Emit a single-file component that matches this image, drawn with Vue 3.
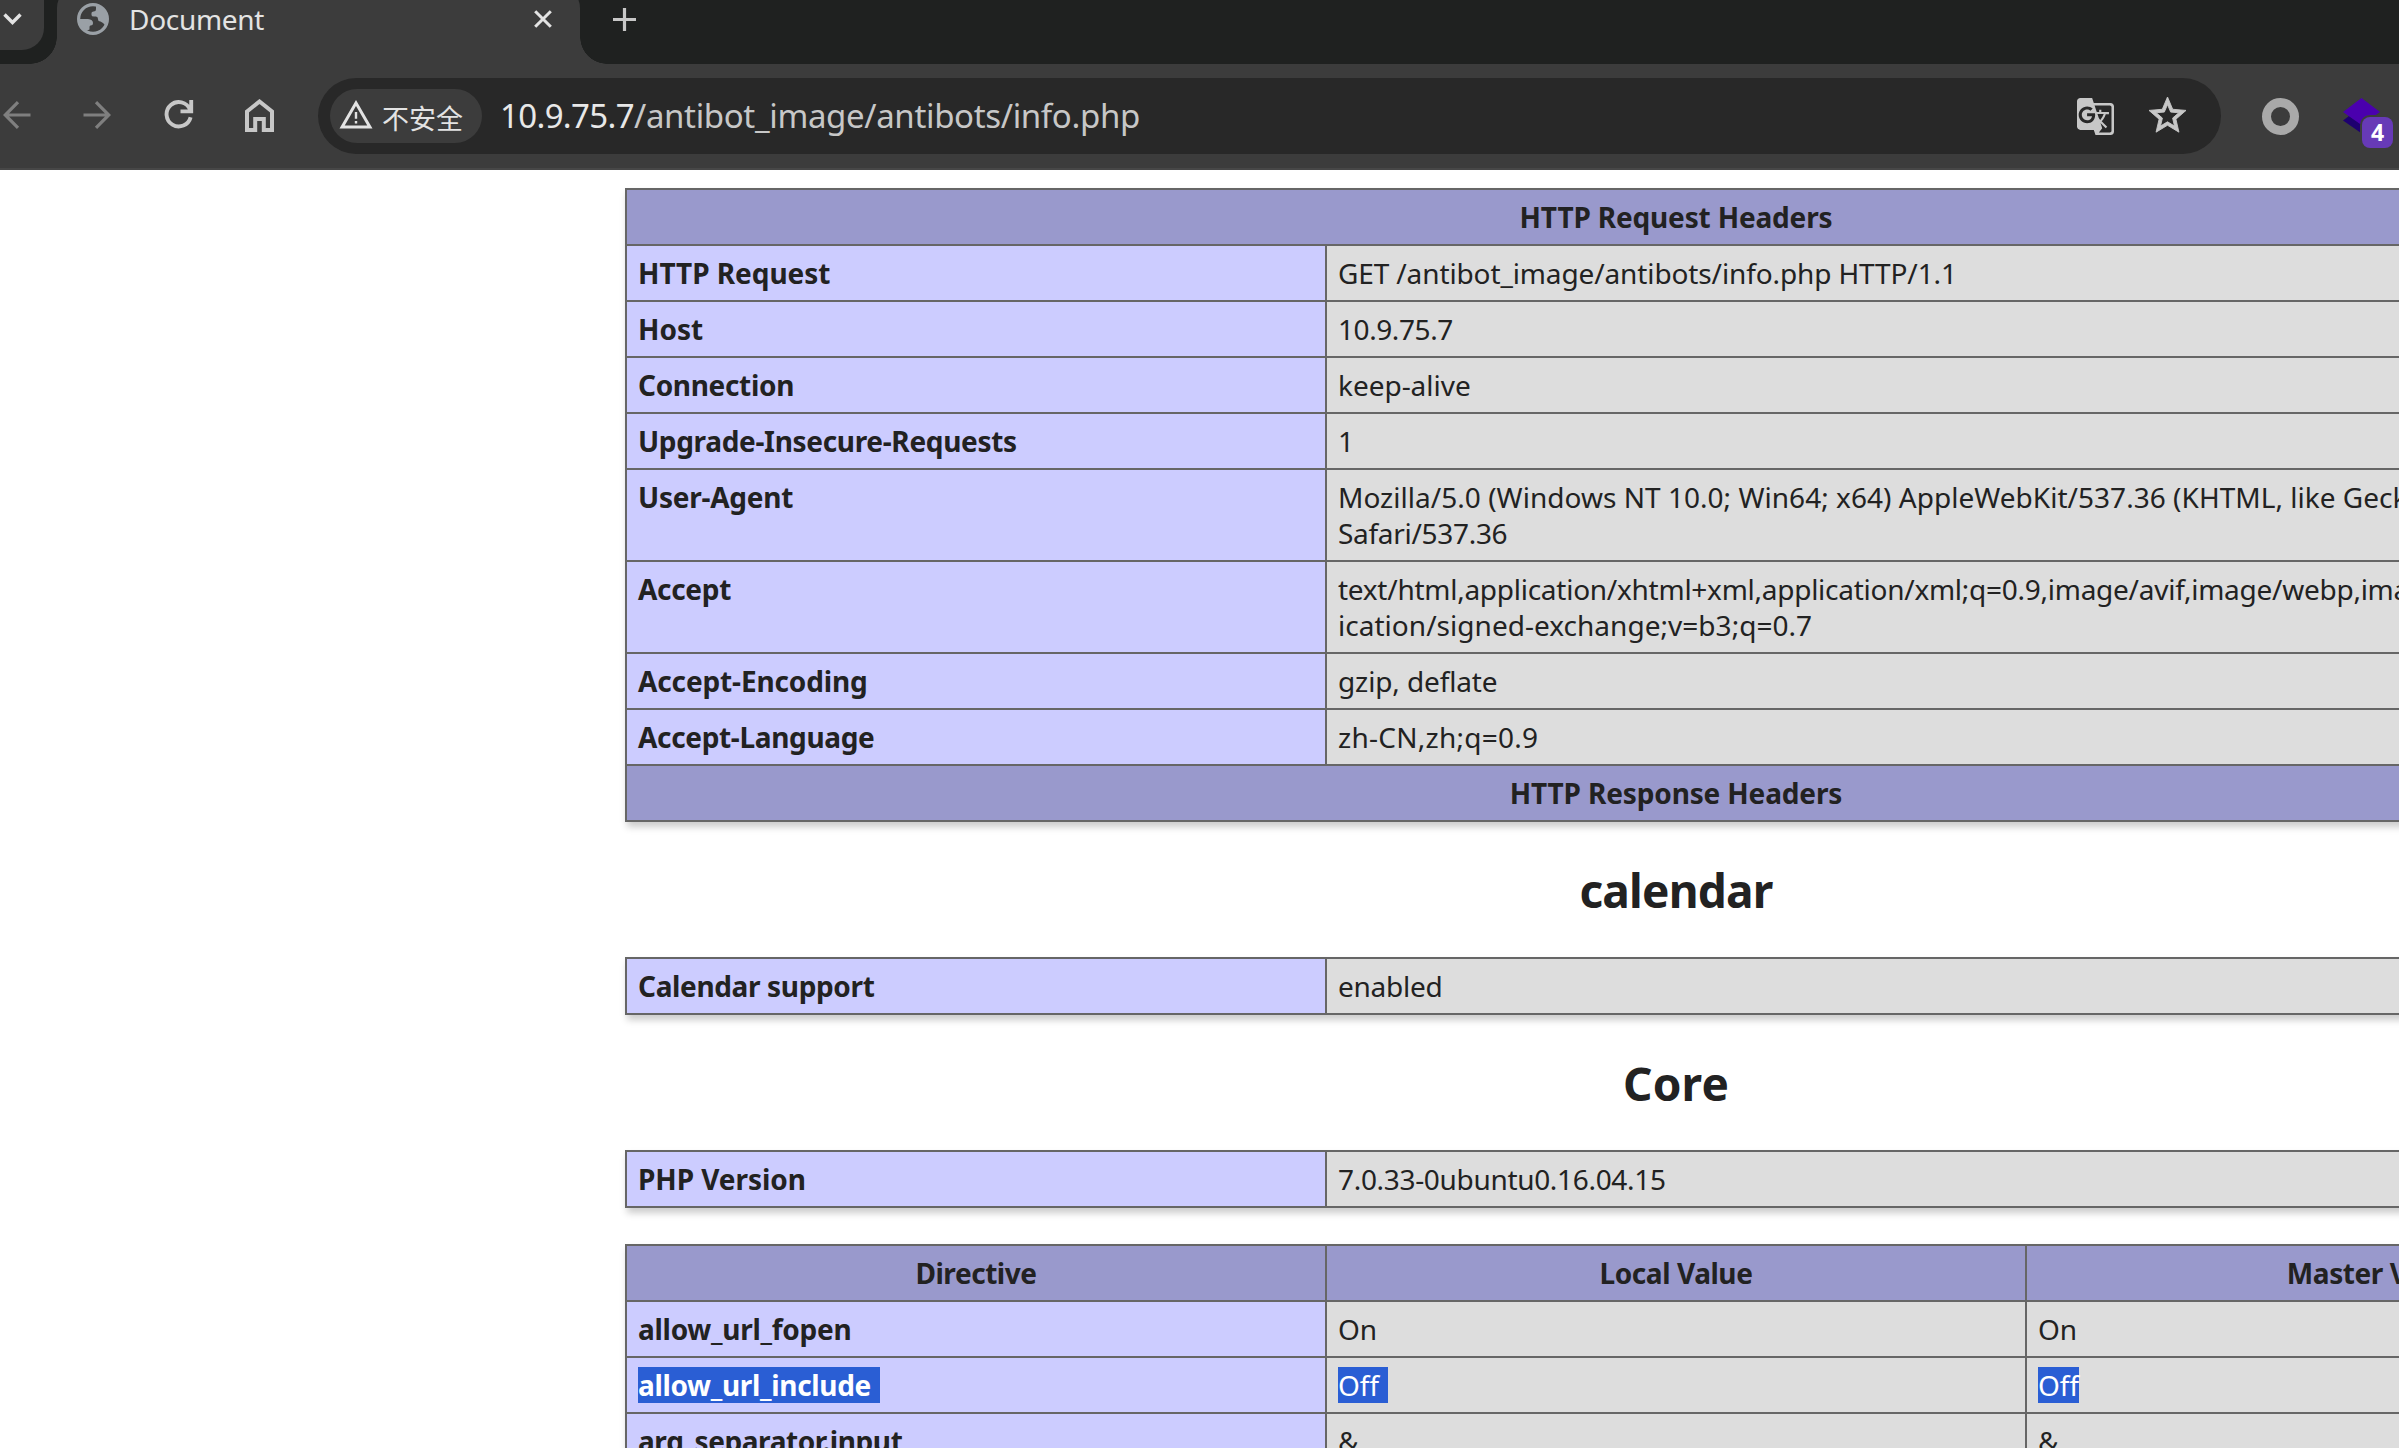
<script setup>
const requestRows = [
  { name: 'HTTP Request', nt: -0.04, lines: [{ text: 'GET /antibot_image/antibots/info.php HTTP/1.1', t: -0.12 }] },
  { name: 'Host', nt: 0, lines: [{ text: '10.9.75.7', t: -0.42 }] },
  { name: 'Connection', nt: -0.32, lines: [{ text: 'keep-alive', t: -0.03 }] },
  { name: 'Upgrade-Insecure-Requests', nt: -0.32, lines: [{ text: '1', t: 0 }] },
  {
    name: 'User-Agent',
    nt: -0.24,
    lines: [
      { text: 'Mozilla/5.0 (Windows NT 10.0; Win64; x64) AppleWebKit/537.36 (KHTML, like Gecko)', t: 0.03 },
      { text: 'Safari/537.36', t: -0.3 },
    ],
  },
  {
    name: 'Accept',
    nt: -0.3,
    lines: [
      { text: 'text/html,application/xhtml+xml,application/xml;q=0.9,image/avif,image/webp,image', t: -0.26 },
      { text: 'ication/signed-exchange;v=b3;q=0.7', t: 0.03 },
    ],
  },
  { name: 'Accept-Encoding', nt: -0.13, lines: [{ text: 'gzip, deflate', t: -0.12 }] },
  { name: 'Accept-Language', nt: -0.34, lines: [{ text: 'zh-CN,zh;q=0.9', t: 0.26 }] },
]

const directives = [
  { name: 'allow_url_fopen', nt: -0.27, local: 'On', master: 'On' },
  { name: 'allow_url_include', nt: -0.32, local: 'Off', master: 'Off', selected: true },
  { name: 'arg_separator.input', nt: -0.42, local: '&', master: '&' },
]

const track = (t) => ({ letterSpacing: `${t}px` })
</script>

<template>
  <div class="window">
    <header class="tabstrip">
      <div class="tab-search">
        <svg width="19" height="12" viewBox="0 0 19 12"><path d="M1.5 1.5l8 8 8-8" fill="none" stroke="#e3e3e3" stroke-width="3.4" /></svg>
      </div>
      <div class="tab">
        <svg class="globe" width="32" height="32" viewBox="0 0 32 32">
          <circle cx="16" cy="16" r="14.4" fill="none" stroke="#9aa0a6" stroke-width="3.2" />
          <path fill="#9aa0a6" d="M19 2.500V6q0 2.500-2.500 2.500-2 0-2 1.500V12q0 1.500 2.500 1.500h2q2 0 2 2.500t2.500 2.500L26 20l2 2a14 14 0 0 0 2-6A14 14 0 0 0 19 2.500z" />
          <path fill="#9aa0a6" d="M2 16h9q5 .5 5 4 0 2.500-2.500 2.500-1 0-1 1.500v2.500L9 28A14 14 0 0 1 2 16z" />
        </svg>
        <span class="tab-title">Document</span>
        <svg class="tab-close" width="18" height="18" viewBox="0 0 18 18"><path d="M1.200 1.200l15.600 15.600M16.800 1.200L1.200 16.800" stroke="#e3e3e3" stroke-width="3" /></svg>
      </div>
      <svg class="new-tab" width="23" height="23" viewBox="0 0 23 23"><path d="M11.500 0v23M0 11.500h23" stroke="#c7c7c7" stroke-width="3.200" /></svg>
    </header>

    <nav class="toolbar">
      <svg class="back" width="28" height="28" viewBox="0 0 28 28"><path d="M27.500 14H3M15 1.200L2.200 14 15 26.800" fill="none" stroke="#7f7f7f" stroke-width="3.200" /></svg>
      <svg class="forward" width="28" height="28" viewBox="0 0 28 28"><path d="M.500 14H25M13 1.200L25.800 14 13 26.800" fill="none" stroke="#7f7f7f" stroke-width="3.200" /></svg>
      <svg class="reload" width="30" height="30" viewBox="0 0 30 30"><path d="M26 9.500A12.200 12.200 0 1 0 26.600 17.200M27.200 0V11.400H16.500" fill="none" stroke="#c7c7c7" stroke-width="3.900" /></svg>
      <svg class="home" width="29" height="33" viewBox="0 0 29 33"><path d="M2 12.500L14.500 2.500 27 12.500V31h-8.200V20h-8.600v11H2z" fill="none" stroke="#c7c7c7" stroke-width="4" /></svg>

      <div class="omnibox">
        <div class="chip">
          <svg width="36" height="36" viewBox="0 0 24 24"><path fill="#e3e3e3" d="M12 5.990L19.530 19H4.470L12 5.990M12 2L1 21h22L12 2zm.8 14h-1.600v1.700h1.600V16zm0-6h-1.600v4.500h1.600V10z" /></svg>
          <span>不安全</span>
        </div>
        <div class="url"><span class="host">10.9.75.7</span><span class="path">/antibot_image/antibots/info.php</span></div>
        <svg class="translate" width="37" height="37" viewBox="1 1 22 22"><path fill="#c7c7c7" d="M21 4H11l-1-3H3c-1.100 0-2 .9-2 2v15c0 1.100.9 2 2 2h8l1 3h9c1.100 0 2-.9 2-2V6c0-1.100-.9-2-2-2zM7 16c-2.760 0-5-2.240-5-5s2.240-5 5-5c1.350 0 2.480.5 3.350 1.300L9.030 8.570c-.38-.36-1.040-.78-2.030-.78-1.740 0-3.150 1.440-3.150 3.210S5.260 14.210 7 14.210c2.010 0 2.840-1.440 2.920-2.410v-.01L7 11.790v-1.710h4.680c.07.31.12.61.12 1.020C11.800 13.970 9.890 16 7 16zm6.170-5.420h3.700c-.43 1.250-1.110 2.430-2.050 3.470-.31-.35-.6-.72-.86-1.100l-.79-2.370zm8.330 9.920c0 .55-.45 1-1 1H14l2-2.500-1.040-3.100 3.100 3.100.92-.92-3.300-3.250.02-.02c1.130-1.250 1.930-2.690 2.400-4.220H20v-1.300h-4.530V8h-1.290v1.290h-1.440L11.460 5.500h9.040c.55 0 1 .45 1 1v14z" /></svg>
        <svg class="star" width="37" height="35.200" viewBox="2 2 20 19"><path fill="#c7c7c7" stroke="#c7c7c7" stroke-width=".5" d="M22 9.240l-7.190-.62L12 2 9.190 8.630 2 9.240l5.460 4.730L5.820 21 12 17.270 18.180 21l-1.630-7.030L22 9.240zM12 15.400l-3.760 2.270 1-4.280-3.320-2.880 4.380-.38L12 6.100l1.710 4.040 4.380.38-3.320 2.880 1 4.280L12 15.400z" /></svg>
      </div>

      <div class="ring"></div>
      <div class="layers">
        <svg width="37" height="35" viewBox="0 0 37 35"><path fill="#1e0070" d="M0 22.500L6 18l12 8v9z" /><path fill="#4a00ae" d="M18.500 0L37 14 18.500 27 0 14z" /></svg>
        <span class="badge">4</span>
      </div>
    </nav>

    <main class="page">
      <div class="table">
        <div class="row"><div class="cell head" :style="track(-0.16)">HTTP Request Headers</div></div>
        <div v-for="r in requestRows" :key="r.name" class="row two">
          <div class="cell name" :style="track(r.nt)">{{ r.name }}</div>
          <div class="cell value">
            <div v-for="l in r.lines" :key="l.text" :style="track(l.t)">{{ l.text }}</div>
          </div>
        </div>
        <div class="row"><div class="cell head" :style="track(-0.14)">HTTP Response Headers</div></div>
      </div>

      <h2 :style="track(-0.8)">calendar</h2>
      <div class="table">
        <div class="row two">
          <div class="cell name" :style="track(-0.35)">Calendar support</div>
          <div class="cell value" :style="track(-0.25)">enabled</div>
        </div>
      </div>

      <h2 :style="track(0.2)">Core</h2>
      <div class="table">
        <div class="row two">
          <div class="cell name" :style="track(-0.05)">PHP Version</div>
          <div class="cell value" :style="track(-0.32)">7.0.33-0ubuntu0.16.04.15</div>
        </div>
      </div>

      <div class="table directives">
        <div class="row three">
          <div class="cell head" :style="track(-0.45)">Directive</div>
          <div class="cell head" :style="track(-0.44)">Local Value</div>
          <div class="cell head" :style="track(-0.44)">Master Value</div>
        </div>
        <div v-for="d in directives" :key="d.name" class="row three">
          <div class="cell name" :style="track(d.nt)"><span :class="{ sel: d.selected, tail: d.selected }">{{ d.name }}</span></div>
          <div class="cell value"><span :class="{ sel: d.selected, tail: d.selected }">{{ d.local }}</span></div>
          <div class="cell value"><span :class="{ sel: d.selected }">{{ d.master }}</span></div>
        </div>
      </div>
    </main>
  </div>
</template>

<style>
body {
  margin: 0;
  overflow: hidden;
  background: #fff;
}
</style>

<style scoped>
.window {
  width: 2399px;
  height: 1448px;
  overflow: hidden;
  display: flex;
  flex-direction: column;
  background: #fff;
  font-family: "Noto Sans", "Noto Sans CJK SC", sans-serif;
}
svg {
  display: block;
  flex: none;
}

/* Tab strip */
.tabstrip {
  flex: none;
  display: flex;
  align-items: flex-start;
  height: 64px;
  background: #1f2120;
}
.tab-search {
  box-sizing: border-box;
  width: 44px;
  height: 50px;
  padding: 13px 0 0 3px;
  border-radius: 0 0 22px 0;
  background: #3c3c3c;
}
.tab {
  position: relative;
  box-sizing: border-box;
  display: flex;
  align-items: center;
  width: 523px;
  height: 78px;
  margin: -14px 0 0 13px;
  padding: 0 28px 12px 20px;
  border-radius: 22px 22px 0 0;
  background: #3c3c3c;
}
.tab::before,
.tab::after {
  content: "";
  position: absolute;
  bottom: 0;
  width: 27px;
  height: 27px;
}
.tab::before {
  right: 100%;
  background: radial-gradient(circle at 0 0, transparent 26.500px, #3c3c3c 27px);
}
.tab::after {
  left: 100%;
  background: radial-gradient(circle at 100% 0, transparent 26.500px, #3c3c3c 27px);
}
.tab-title {
  margin-left: 20px;
  font-size: 28px;
  line-height: 36px;
  letter-spacing: -0.3px;
  color: #e3e3e3;
}
.tab-close {
  margin-left: auto;
}
.new-tab {
  margin: 8px 0 0 33px;
}

/* Toolbar */
.toolbar {
  flex: none;
  box-sizing: border-box;
  display: flex;
  align-items: center;
  height: 106px;
  padding-bottom: 2px;
  border-bottom: 2px solid #474747;
  background: #3c3c3c;
}
.back { margin-left: 3px; }
.forward { margin-left: 52px; }
.reload { margin-left: 53px; }
.home { margin-left: 51px; }
.omnibox {
  box-sizing: border-box;
  display: flex;
  align-items: center;
  width: 1903px;
  height: 76px;
  margin: 2px 0 0 44px;
  padding: 0 35px 0 12px;
  border-radius: 38px;
  background: #282828;
}
.chip {
  box-sizing: border-box;
  display: flex;
  align-items: center;
  width: 152px;
  height: 54px;
  padding-left: 8px;
  border-radius: 27px;
  background: #3c3c3c;
  color: #e3e3e3;
  font: 27px/36px "Noto Sans CJK SC", sans-serif;
}
.chip svg { margin-bottom: 3px; }
.chip span {
  margin: 4px 0 0 8px;
  white-space: nowrap;
}
.url {
  margin-left: 18px;
  font-size: 33px;
  line-height: 44px;
  white-space: nowrap;
}
.host {
  color: #e8e8e8;
  letter-spacing: -0.65px;
}
.path {
  color: #c7c7c7;
  letter-spacing: -0.35px;
}
.translate { margin-left: auto; }
.star { margin: 0 0 2px 35px; }
.ring {
  box-sizing: border-box;
  width: 37px;
  height: 37px;
  margin: 2px 0 0 41px;
  border: 9.500px solid #a9a9a9;
  border-radius: 50%;
}
.layers {
  position: relative;
  margin-left: 44px;
}
.badge {
  position: absolute;
  left: 19px;
  top: 19px;
  width: 31px;
  height: 31px;
  border-radius: 8px;
  background: #673ab7;
  box-shadow: 0 0 0 2px #3c3c3c;
  color: #fff;
  font-size: 23px;
  font-weight: 700;
  line-height: 31px;
  text-align: center;
}

/* phpinfo page */
.page {
  width: 2102px;
  margin-left: 625px;
  padding-top: 18px;
  color: #222;
  font-size: 28px;
  line-height: 36px;
}
.table {
  display: grid;
  gap: 2px;
  padding: 2px;
  background: #666;
  box-shadow: 2px 5px 7px #ccc;
}
.directives { margin-top: 36px; }
.row {
  display: grid;
  gap: 2px;
}
.two { grid-template-columns: 698px 1398px; }
.three { grid-template-columns: repeat(3, 698px); }
.cell {
  padding: 9px 11px;
  white-space: nowrap;
  overflow: hidden;
}
.head {
  background: #99c;
  font-weight: 700;
  text-align: center;
}
.name {
  background: #ccf;
  font-weight: 700;
}
.value { background: #ddd; }
.sel {
  display: inline-block;
  height: 36px;
  vertical-align: top;
  background: #2a5ed4;
  color: #fff;
}
.tail { padding-right: 9px; }
h2 {
  margin: 0;
  padding: 38px 0 37px;
  font-size: 46px;
  font-weight: 700;
  line-height: 60px;
  text-align: center;
}
</style>
